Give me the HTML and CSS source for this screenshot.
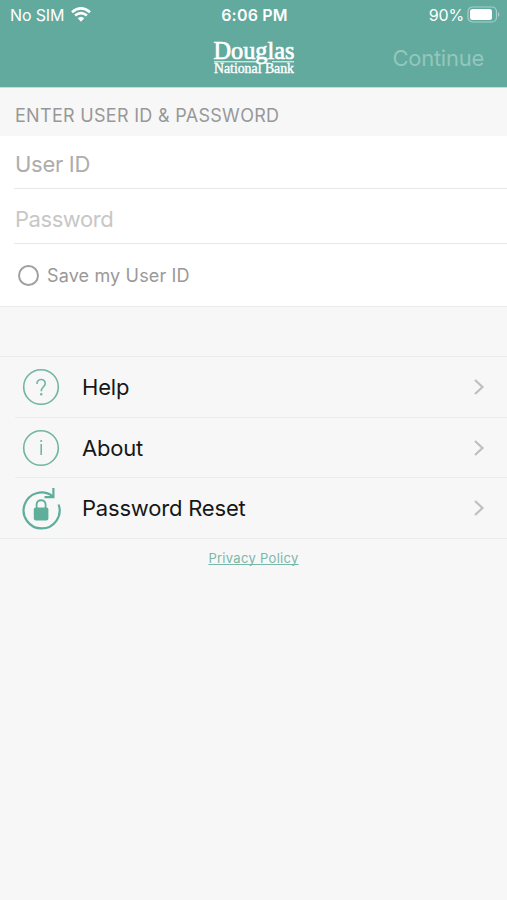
FILE: index.html
```html
<!DOCTYPE html>
<html lang="en">
<head>
<meta charset="utf-8">
<title>Douglas National Bank</title>
<link rel="stylesheet" href="styles.css">
</head>
<body>
<header class="top">
  <div class="status">
    <div class="carrier"><span>No SIM</span>
      <svg width="20" height="15" viewBox="0 0 20 15" fill="none" stroke="#fff" stroke-width="2.7"><path d="M1 5.2Q10-2.4 19 5.2M4.1 8.5Q10 3.6 15.9 8.5"/><path d="M6.7 11.3Q10 8.3 13.3 11.3L10 14.7Z" fill="#fff" stroke="none"/></svg>
    </div>
    <div class="time">6:06 PM</div>
    <div class="battery"><span>90%</span>
      <svg width="34" height="17" viewBox="0 0 34 17"><rect x="1" y="1" width="28.5" height="15" rx="4.5" fill="none" stroke="#fff" stroke-opacity=".45" stroke-width="1.2"/><rect x="3" y="3" width="22" height="11" rx="2.5" fill="#fff"/><path d="M31 6q3 2.5 0 5z" fill="#fff" fill-opacity=".45"/></svg>
    </div>
  </div>
  <div class="nav">
    <svg class="logo" width="84" height="38" viewBox="0 0 84 38" fill="#fff"><text class="logo-big" x="1.5" y="18" textLength="81" lengthAdjust="spacingAndGlyphs">Douglas</text><path d="M2 20.8H44M60 20.8H82" stroke="#fff" stroke-width="1"/><text class="logo-small" x="2" y="32" textLength="80" lengthAdjust="spacingAndGlyphs">National Bank</text></svg>
    <span class="continue">Continue</span>
  </div>
</header>
<main>
  <h1 class="heading">ENTER USER ID &amp; PASSWORD</h1>
  <section class="form">
    <div class="field user"><span>User ID</span></div>
    <div class="field password"><span>Password</span></div>
    <div class="save"><span class="radio"></span><span class="save-label">Save my User ID</span></div>
  </section>
  <nav class="menu">
    <div class="item">
      <svg class="icon" width="44" height="44" viewBox="0 0 44 44" fill="none" stroke="#71b5a3" stroke-width="1.6"><circle cx="22" cy="22" r="17.3"/><path d="M18 19C18 13.2 26.2 13.2 26.2 18.4C26.2 21.7 22.2 21.9 22.2 26.3"/><circle cx="22.2" cy="29.2" r="1.2" fill="#71b5a3" stroke="none"/></svg>
      <div class="row"><span class="help">Help</span><svg class="chevron" width="12" height="18" viewBox="0 0 12 18"><path d="M2 2L9.5 9L2 16"/></svg></div>
    </div>
    <div class="item">
      <svg class="icon" width="44" height="44" viewBox="0 0 44 44" fill="none" stroke="#71b5a3" stroke-width="1.6"><circle cx="22" cy="22" r="17.3"/><path d="M22.2 18V29"/><circle cx="22.2" cy="15" r="1.1" fill="#71b5a3" stroke="none"/></svg>
      <div class="row"><span class="about">About</span><svg class="chevron" width="12" height="18" viewBox="0 0 12 18"><path d="M2 2L9.5 9L2 16"/></svg></div>
    </div>
    <div class="item">
      <svg class="icon reset-icon" width="44" height="44" viewBox="0 0 44 44" fill="none" stroke="#5fae9b" stroke-width="2.2"><path d="M39.6 17.5A18 18 0 1 1 33.6 9.2"/><path d="M25.5 10.2H34.4V1"/><rect x="14.8" y="20.5" width="14.6" height="13" rx="2" fill="#5fae9b" stroke="none"/><path d="M17.6 21V17.5C17.6 11.8 26.6 11.8 26.6 17.5V21" stroke-width="1.8"/></svg>
      <div class="row"><span class="reset">Password Reset</span><svg class="chevron" width="12" height="18" viewBox="0 0 12 18"><path d="M2 2L9.5 9L2 16"/></svg></div>
    </div>
  </nav>
  <a class="privacy">Privacy Policy</a>
</main>
</body>
</html>
```
FILE: styles.css
```css
* { box-sizing: border-box; }
body { margin: 0; min-height: 900px; background: #f7f7f7; font-family: Inter, "Liberation Sans", sans-serif; color: #171717; }
svg { display: block; flex: none; }
.top { height: 88px; background: #62a99e; border-bottom: 1px solid #c4ddd9; color: #fff; }
.status { height: 30px; padding: 0 8px 0 10px; display: grid; grid-template-columns: 1fr auto 1fr; align-items: center; font-size: 16px; line-height: 30px; }
.carrier, .battery { display: flex; align-items: center; gap: 7px; letter-spacing: -.15px; }
.battery { justify-content: flex-end; gap: 3px; margin-right: -2px; }
.battery svg, .carrier svg { margin-top: -2px; }
.time { font-weight: 600; letter-spacing: .2px; }
.nav { height: 57px; display: grid; grid-template-columns: 1fr 84px 1fr; padding-right: 23px; padding-left: 23px; align-items: center; }
.logo { grid-column: 2; margin-top: 3px; overflow: visible; }
.logo-big { font: 400 25px "Liberation Serif", serif; stroke: #fff; stroke-width: .7px; }
.logo-small { font: 400 14px "Liberation Serif", serif; stroke: #fff; stroke-width: .4px; }
.continue { justify-self: end; font-size: 22px; letter-spacing: -.25px; margin-top: -2px; color: #93c7bc; }
.heading { margin: 0; height: 48px; padding: 4px 15px 0; font-size: 18px; font-weight: 400; line-height: 48px; letter-spacing: .3px; color: #989898; white-space: nowrap; }
.form { height: 171px; background: #fff; border-bottom: 1px solid #ebecec; }
.field { margin-left: 14px; padding-left: 1px; font-size: 22px; border-bottom: 1px solid #e7e8e8; }
.user { height: 53px; line-height: 56px; letter-spacing: -.3px; color: #adadad; }
.password { height: 55px; line-height: 60px; letter-spacing: -.45px; color: #c7c7c7; }
.save { display: flex; align-items: center; height: 62px; padding-left: 18px; gap: 8px; color: #999; font-size: 18px; letter-spacing: .15px; }
.radio { width: 21px; height: 21px; border: 2px solid #a0a0a0; border-radius: 50%; }
.menu { margin-top: 49px; border-top: 1px solid #ebecec; border-bottom: 1px solid #ebecec; }
.item { height: 60.6px; display: flex; padding-left: 19px; align-items: center; background: linear-gradient(#ebecec, #ebecec) 15px 100% / 100% 1px no-repeat; }
.item:last-child { background: none; height: 60.2px; }
.row { flex: 1; display: flex; align-items: center; justify-content: space-between; margin-left: 19px; padding-right: 22px; font-size: 22px; letter-spacing: -.2px; }
.reset-icon { margin-top: 1px; }
.chevron { fill: none; stroke: #bfbfbf; stroke-width: 2.2; }
.privacy { display: block; margin-top: 9px; text-align: center; font-size: 13px; line-height: 20px; color: #79b8a9; text-decoration: underline; text-decoration-skip-ink: none; text-underline-offset: 1px; letter-spacing: .3px; }
```
